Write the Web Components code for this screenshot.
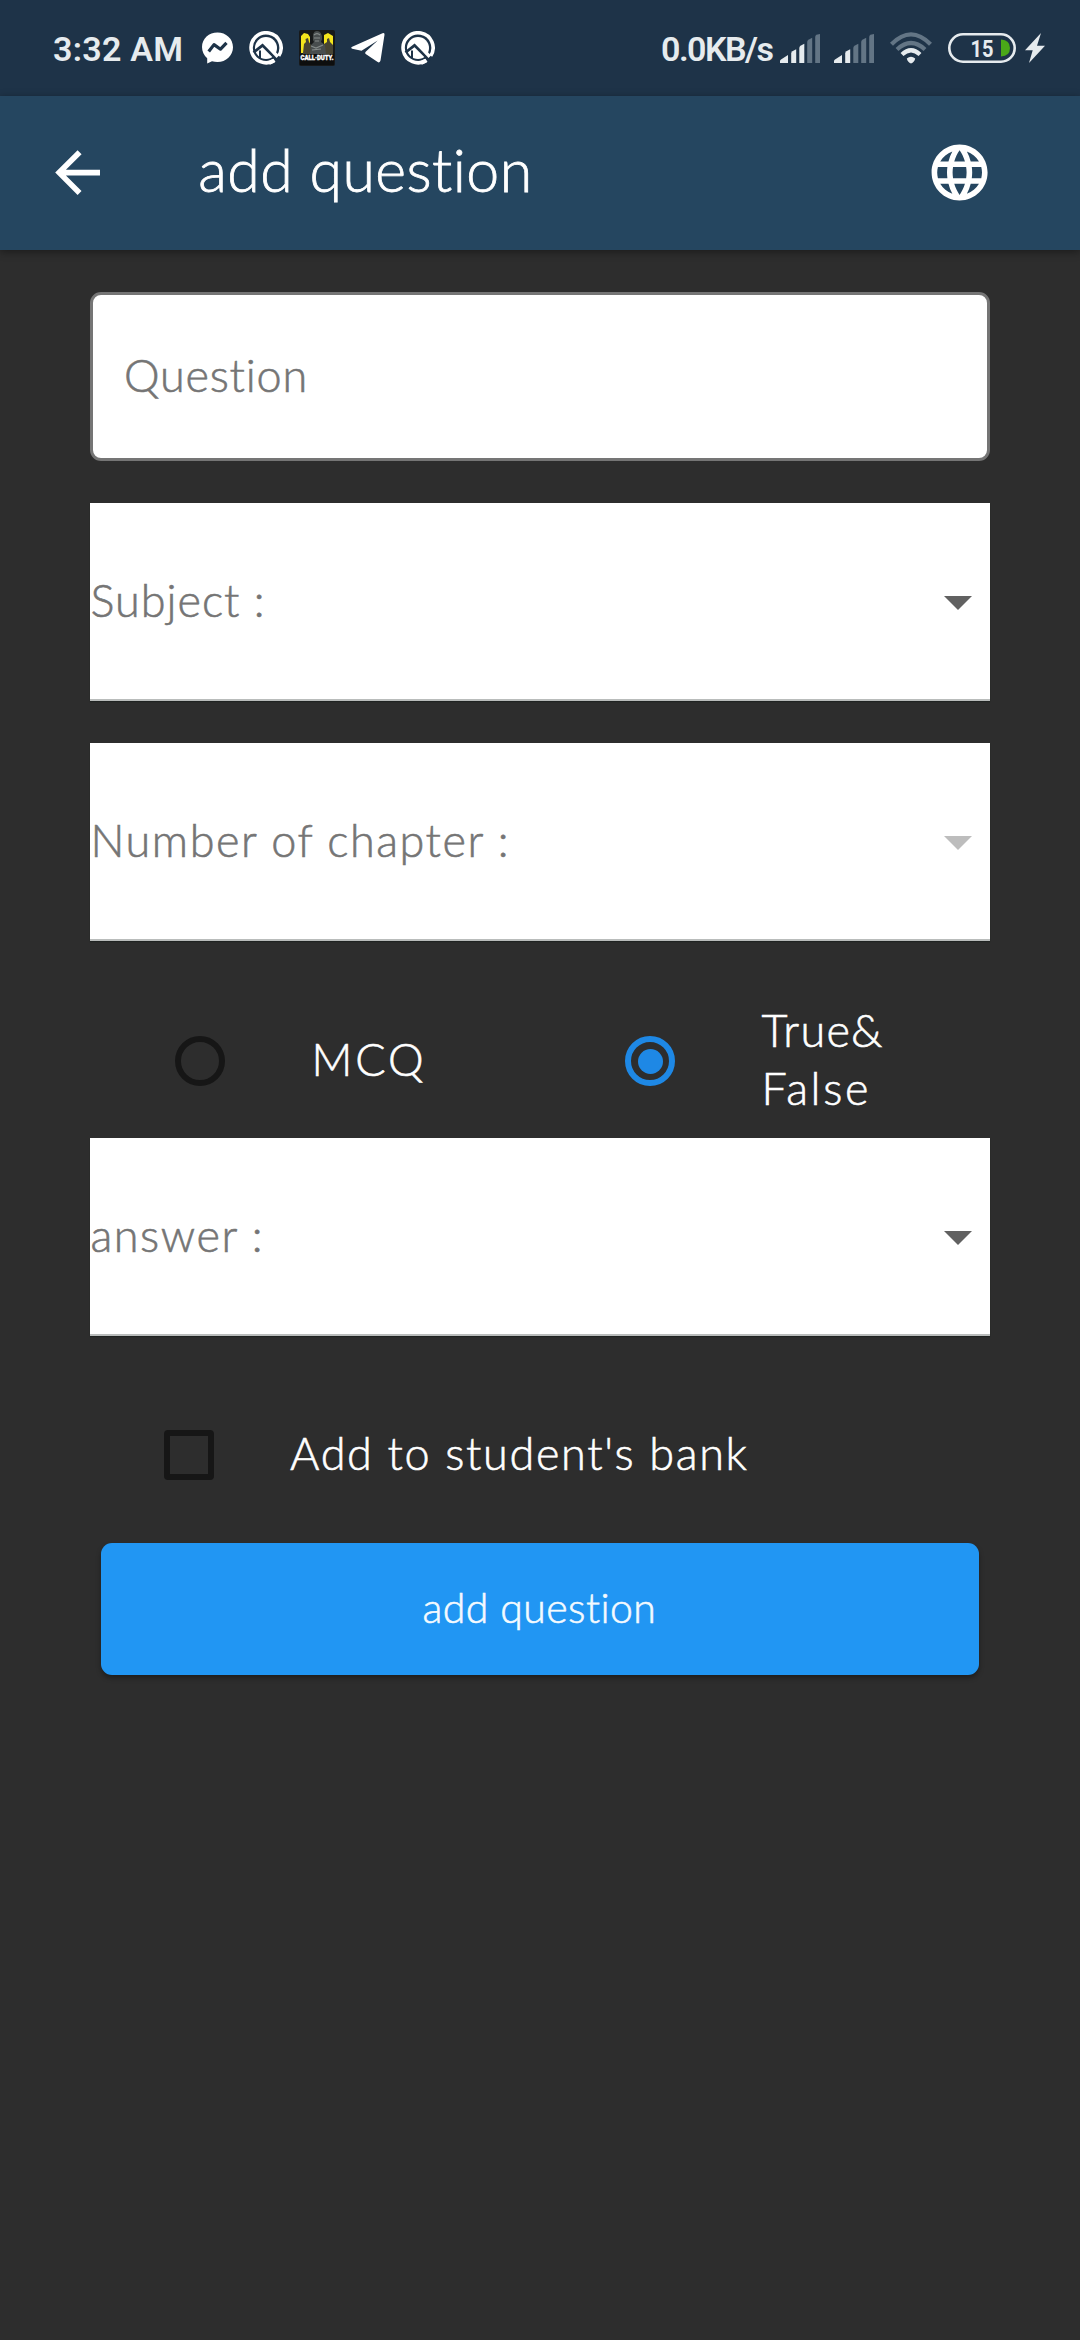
<!DOCTYPE html>
<html lang="en">
<head>
<meta charset="utf-8">
<title>add question</title>
<style>
html,body{margin:0;padding:0;background:#2d2d2d}
body{width:1080px;height:2340px;overflow:hidden;font-family:Lato,"Open Sans",sans-serif;font-weight:300;-webkit-font-smoothing:antialiased}
</style>
</head>
<body>
<question-screen></question-screen>
<script>
const define=(name,html,ready)=>{
  const t=document.createElement('template');t.innerHTML=html;
  customElements.define(name,class extends HTMLElement{
    constructor(){super();this.attachShadow({mode:'open'}).append(t.content.cloneNode(true));}
    connectedCallback(){if(ready)ready(this,this.shadowRoot);}
  });
};

/* A single line of text tracked to a given advance width. */
define('fit-text',`<style>:host{display:block;white-space:pre;flex:none}span{display:inline-block}</style><span><slot></slot></span>`,(el,root)=>{
  const s=root.querySelector('span'),w=+el.getAttribute('width'),n=el.textContent.length;
  el.style.width=w+'px';
  s.style.letterSpacing=((w-s.getBoundingClientRect().width)/(n-1))+'px';
});

define('quick-icon',`<style>:host{display:block;width:34px;height:34px}svg{display:block}</style>
<svg width="34" height="34" viewBox="0 0 34 34"><path d="M25.500 29.200A15 15 0 1 1 29.700 24.900" fill="none" stroke="#fff" stroke-width="3.600"/><path d="M20 31.800 25 29.600" stroke="#fff" stroke-width="4"/><circle cx="17" cy="17" r="11" fill="#fff"/><path d="M4.500 21.500 13.500 14.300 29 29.800" fill="none" stroke="#1e3348" stroke-width="2.800"/><path d="M11 19.500v8" stroke="#1e3348" stroke-width="2"/><path d="M14.500 12.500 18 11.500 30 24.500 27.500 27Z" fill="#fff"/></svg>`);

define('signal-bars',`<style>:host{display:block;width:40px;height:29px}svg{display:block}path{fill:#637585}path.on{fill:#e6ebee}</style>
<svg width="40" height="29" viewBox="0 0 40 29"><path d="M0 29v-2q0-1 1-1.600l7-4.400V29z"/><path d="M11.200 29V19.500q0-1.500 1.200-2.200l3.800-2V29z"/><path d="M19.300 29V14q0-1.500 1.200-2.200l3.800-2V29z"/><path d="M27.200 29V8q0-1.500 1.200-2.200l3.800-2V29z"/><path d="M35.200 29V3q0-1.500 1.200-2.200L40 0v29z"/></svg>`,(el,r)=>{
  r.querySelectorAll('path').forEach((p,i)=>p.classList.toggle('on',i<+el.getAttribute('level')));
});

define('status-bar',`<style>
:host{display:flex;height:96px;box-sizing:border-box;background:#1e3348;color:#e6ebee;align-items:center;padding:0 35px 0 53px;font:500 34px/40px Roboto,sans-serif}
svg{display:block;flex:none;overflow:visible}fit-text{font-weight:600;margin-top:1px}
.icons{display:flex;align-items:center;margin-left:19px;gap:16px}
.right{display:flex;align-items:center;margin-left:auto}
</style>
<fit-text width="130">3:32 AM</fit-text>
<div class="icons">
<svg width="31" height="32" viewBox="0 0 31 32"><path fill="#fff" d="M15.500 0.500C7 .5 0 6.600 0 15c0 4.700 2 8.500 5.200 11.200V31.500L10 29.200C11.800 29.800 13.600 30 15.500 30 24 30 31 23.600 31 15.200S24 .5 15.500 .5Z"/><path d="M6.700 19.500 12 12.600l6.500 4.600 6-6.400" fill="none" stroke="#1e3348" stroke-width="3.200" stroke-linejoin="round"/></svg>
<quick-icon></quick-icon>
<svg width="36" height="36" viewBox="0 0 36 36"><rect width="36" height="36" rx="2" fill="#17191a"/><path d="M2 6 5 3 9 4l2 3v16H2ZM25 5l4-2 5 3v17h-9Z" fill="#f4e41c"/><path d="M4 23 5 14l2-2-.5-3L9 8l1 4 2 3v9H4ZM25 24V14l3-2V9l2-1 1 4 3 3v9Z" fill="#484433"/><path d="M14 10Q13 1 18 1t5 8l-1 3 4 3 1 9H11l1-9 3-3Z" fill="#484d4e"/><path d="M15 5q3-3 6 0M15 8h6M16 11h4M12 16l5 2 7-3M13 20l9-1" stroke="#858b8a" stroke-width="1.200" fill="none"/><path d="M1 24H35V35H1Z" fill="#0d0e0e"/><text x="1.500" y="30" textLength="33" lengthAdjust="spacingAndGlyphs" font-family="Roboto" font-weight="900" font-size="7" fill="#fff" stroke="#fff" stroke-width=".3">CALL·DUTY.</text></svg>
<svg width="34" height="30" viewBox="0 0 34 30"><path fill="#fff" d="M1.200 13.800 31.500.3q2.300-.8 2 1.500L29.500 27.600q-.7 2.900-3.200 1.200L14.700 21.100q-1.300-1 0-2.300L26.700 7.500 10.500 17.800 1.200 15.700q-2-.9 0-1.900Z"/></svg>
<quick-icon></quick-icon>
</div>
<div class="right">
<fit-text width="113">0.0KB/s</fit-text>
<signal-bars level="3" style="margin-left:6px"></signal-bars>
<signal-bars level="2" style="margin-left:14px"></signal-bars>
<svg style="margin-left:16px" width="42" height="32" viewBox="0 0 42 32"><g fill="none" stroke-width="4.200"><path d="M1.500 12.300Q21-7.500 40.500 12.300" stroke="#637585"/><path d="M7 17.500Q21 4.500 35 17.500" stroke="#637585"/><path d="M12 22.500Q21 14 30 22.500" stroke="#e6ebee"/></g><path d="M16.800 26.500Q21 23 25.200 26.500 24.500 30 21 31.500 17.500 30 16.800 26.500Z" fill="#e6ebee"/></svg>
<svg style="margin-left:16px" width="68" height="30" viewBox="0 0 68 30"><rect x="1.300" y="1.300" width="65.400" height="27.400" rx="13.700" fill="none" stroke="#e6ebee" stroke-width="2.600"/><path d="M53 6.500q9 .5 9 8.500t-9 8.500Z" fill="#4aa818"/><text x="22.500" y="23.500" textLength="23" lengthAdjust="spacingAndGlyphs" font-family="Roboto" font-weight="700" font-size="24" fill="#e6ebee">15</text></svg>
<svg style="margin-left:9px" width="20" height="30" viewBox="0 0 20 30"><path d="M16 0 0 17.300h7.700L4 30 20 12.800H12Z" fill="#e6ebee"/></svg>
</div>`);

define('app-bar',`<style>
:host{display:flex;position:relative;height:154px;box-sizing:border-box;background:#254660;color:#fff;align-items:center;padding:0 87px 0 44px;box-shadow:0 2px 8px rgba(0,0,0,.4)}
svg{display:block;fill:#fff}.title{font-size:59px;line-height:70px;margin:0 auto 6px 87px;-webkit-text-stroke:.8px currentColor}
</style>
<svg width="67.200" height="67.200" viewBox="0 0 24 24"><path d="M20 11H7.830l5.590-5.590L12 4l-8 8 8 8 1.410-1.410L7.830 13H20v-2z"/></svg>
<div class="title"><slot></slot></div>
<svg width="67.200" height="67.200" viewBox="0 0 24 24"><path d="M11.990 2C6.470 2 2 6.480 2 12s4.470 10 9.990 10C17.520 22 22 17.520 22 12S17.520 2 11.990 2zm6.930 6h-2.950c-.32-1.250-.78-2.450-1.380-3.560 1.840.63 3.370 1.910 4.330 3.560zM12 4.040c.83 1.200 1.480 2.530 1.910 3.960h-3.820c.43-1.430 1.080-2.760 1.910-3.960zM4.260 14C4.100 13.360 4 12.690 4 12s.1-1.360.26-2h3.380c-.08.66-.14 1.320-.14 2s.06 1.340.14 2H4.260zm.82 2h2.950c.32 1.250.78 2.450 1.380 3.560-1.840-.63-3.370-1.900-4.330-3.560zm2.950-8H5.080c.96-1.660 2.490-2.930 4.330-3.560C8.810 5.550 8.350 6.750 8.030 8zM12 19.960c-.83-1.200-1.480-2.530-1.910-3.960h3.820c-.43 1.430-1.080 2.760-1.910 3.960zM14.340 14H9.660c-.09-.66-.16-1.320-.16-2s.07-1.350.16-2h4.680c.09.65.16 1.320.16 2s-.07 1.340-.16 2zm.25 5.560c.6-1.110 1.060-2.310 1.380-3.560h2.950c-.96 1.650-2.490 2.930-4.330 3.560zM16.360 14c.08-.66.14-1.320.14-2s-.06-1.340-.14-2h3.380c.16.640.26 1.310.26 2s-.1 1.360-.26 2h-3.380z"/></svg>`);

define('text-box',`<style>:host{display:flex;align-items:center;box-sizing:border-box;height:169px;background:#fff;border:3px solid #757575;border-radius:11px;padding:0 31px 3px;color:#757575;font-size:45px;line-height:56px}</style><slot></slot>`);

define('drop-down',`<style>
:host{display:flex;align-items:center;justify-content:space-between;box-sizing:border-box;height:198px;background:#fff;border-bottom:2px solid #b9bcbb;padding:0 18.500px 0 0;color:#757575;font-size:45px;line-height:56px;box-shadow:0 1px 1px #202322}
.label{margin:0 0 2px .5px}svg{display:block;fill:#616161;margin-top:3px}:host([disabled]) svg{fill:#bdbdbd}
</style><div class="label"><slot></slot></div><svg width="28" height="14" viewBox="0 0 28 14"><path d="M0 0H28L14 14Z"/></svg>`);

define('radio-option',`<style>
:host{display:flex;align-items:center;width:450px;box-sizing:border-box;padding-left:85px;gap:86.500px;color:#fff;font-size:45px;line-height:58px}
i{display:flex;align-items:center;justify-content:center;box-sizing:border-box;width:50px;height:50px;border:6px solid #161616;border-radius:50%}
:host([checked]) i{border-color:#1e88e5}:host([checked]) i::before{content:"";width:25px;height:25px;border-radius:50%;background:#1e88e5}
.label{margin-bottom:4px}
</style><i></i><div class="label"><slot></slot></div>`);

define('check-option',`<style>
:host{display:flex;align-items:center;height:50px;padding-left:74px;gap:76px;color:#fff;font-size:45px;line-height:50px}
i{box-sizing:border-box;width:50px;height:50px;border:6px solid #161616;border-radius:4px}.label{margin-bottom:4px}
</style><i></i><div class="label"><slot></slot></div>`);

define('raised-button',`<style>
:host{display:flex;align-items:center;justify-content:center;height:132px;border-radius:11px;background:#2196f3;color:#f4faff;font-size:41px;line-height:50px;box-shadow:0 3px 5px rgba(0,0,0,.35);box-sizing:border-box;padding:0 1px 2px 0}
</style><slot></slot>`);

define('question-screen',`<style>
:host{display:flex;flex-direction:column;width:1080px;height:2340px;background:#2d2d2d}
main{display:flex;flex-direction:column;padding:42px 90px 0;-webkit-text-stroke:.6px currentColor}
drop-down{margin-top:42px}
.radios{display:flex;height:154px;margin-top:43px;align-items:center}
.radios + drop-down{margin-top:0}
check-option{margin-top:94px}raised-button{margin:63px 11px 0}
</style>
<status-bar></status-bar>
<app-bar><fit-text width="335">add question</fit-text></app-bar>
<main>
<text-box><fit-text width="184">Question</fit-text></text-box>
<drop-down><fit-text width="174">Subject :</fit-text></drop-down>
<drop-down disabled><fit-text width="418">Number of chapter :</fit-text></drop-down>
<div class="radios">
<radio-option><fit-text width="112">MCQ</fit-text></radio-option>
<radio-option checked><fit-text width="121">True&amp;</fit-text><fit-text width="107">False</fit-text></radio-option>
</div>
<drop-down><fit-text width="172">answer :</fit-text></drop-down>
<check-option><fit-text width="457">Add to student's bank</fit-text></check-option>
<raised-button><fit-text width="234">add question</fit-text></raised-button>
</main>`);
</script>
</body>
</html>
